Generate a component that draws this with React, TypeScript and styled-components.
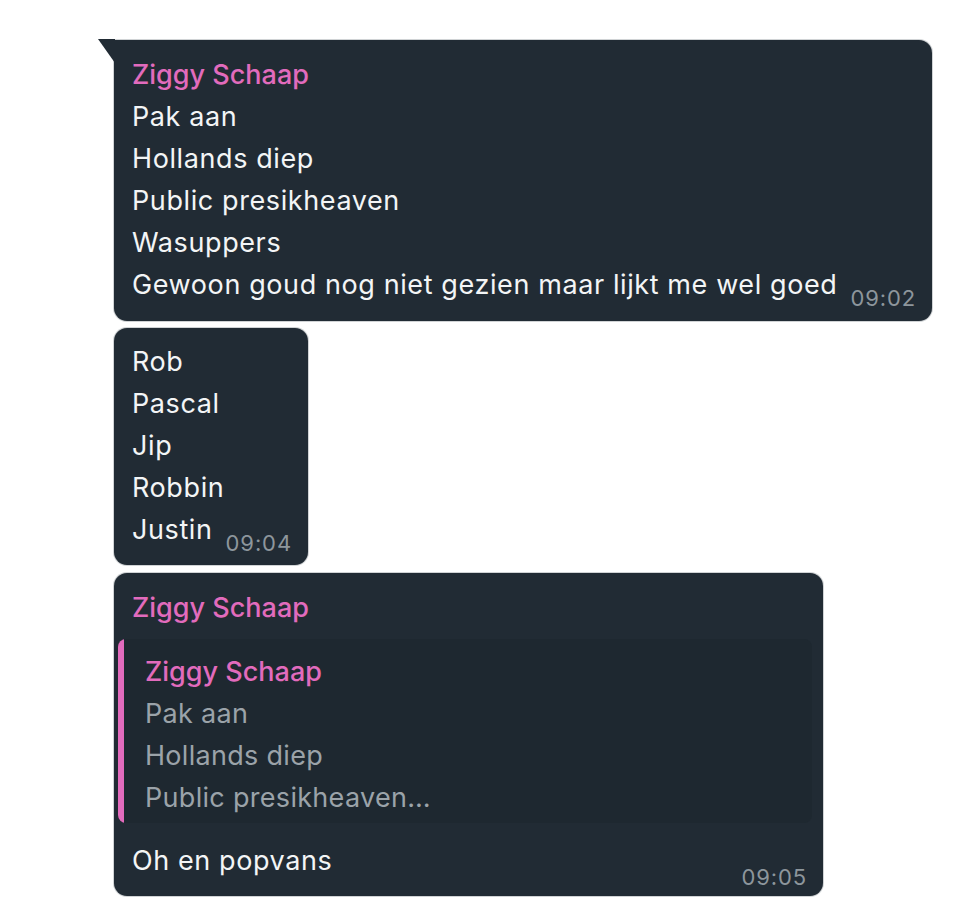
import React from "react";
import styled, { createGlobalStyle } from "styled-components";

const Global = createGlobalStyle`
  html, body { margin: 0; padding: 0; background: #ffffff; }
  body { font-family: Inter, "Noto Sans", sans-serif; }
`;

const Page = styled.div`
  width: 954px;
  height: 910px;
  box-sizing: border-box;
  padding: 40px 0 0 114px;
  display: flex;
  flex-direction: column;
  align-items: flex-start;
  gap: 7px;
  background: #fff;
`;

const Bubble = styled.div<{ $tail?: boolean; $width?: number; $pad?: string }>`
  position: relative;
  box-sizing: border-box;
  width: ${(p) => (p.$width ? `${p.$width}px` : "fit-content")};
  background: #212b34;
  border-radius: ${(p) => (p.$tail ? "0 13px 13px 13px" : "13px")};
  padding: ${(p) => p.$pad ?? "14px 16px 14px 18px"};
  color: #f3f5f6;
  font-size: 27px;
  letter-spacing: 0.6px;
  line-height: 42px;
  box-shadow: 0 0 0 1px rgba(120, 128, 134, 0.35);
  ${(p) =>
    p.$tail &&
    `
    &::before {
      content: "";
      position: absolute;
      left: -16px;
      top: -1px;
      width: 17px;
      height: 24px;
      background: #212b34;
      clip-path: polygon(0 0, 100% 0, 100% 100%);
    }
  `}
`;

const Name = styled.div`
  color: #e26bbd;
  font-weight: 500;
  letter-spacing: 0;
`;

const Line = styled.div`
  white-space: nowrap;
`;

const Time = styled.span`
  position: relative;
  top: 12px;
  display: inline-block;
  margin-left: 13px;
  font-size: 22px;
  letter-spacing: 0.9px;
  color: #8d969c;
  line-height: 20px;
`;

const LastRow = styled.div`
  display: flex;
  justify-content: space-between;
  align-items: flex-end;
`;

const EndTime = styled.span`
  font-size: 22px;
  letter-spacing: 0.9px;
  color: #8d969c;
  line-height: 22px;
  margin-bottom: -6px;
`;

const Quote = styled.div`
  position: relative;
  box-sizing: border-box;
  margin: 10px 0 17px -14px;
  width: 694px;
  background: #1e2830;
  border-radius: 8px;
  padding: 12px 10px 4px 27px;
  overflow: hidden;
  &::before {
    content: "";
    position: absolute;
    left: 0;
    top: 0;
    bottom: 0;
    width: 6px;
    background: #e26bbd;
  }
`;

const QuoteLine = styled.div`
  color: #9ba3a9;
  letter-spacing: 0.3px;
`;

const Spacer = styled.div`
  height: 1px;
  margin-top: -7px;
`;

export default function App() {
  return (
    <>
      <Global />
      <Page>
        <Bubble $tail $pad="14px 16px 15px 18px">
          <Name>Ziggy Schaap</Name>
          <Line>Pak aan</Line>
          <Line>Hollands diep</Line>
          <Line>Public presikheaven</Line>
          <Line>Wasuppers</Line>
          <Line>
            Gewoon goud nog niet gezien maar lijkt me wel goed
            <Time>09:02</Time>
          </Line>
        </Bubble>
        <Bubble $pad="13px 16px 14px 18px">
          <Line>Rob</Line>
          <Line>Pascal</Line>
          <Line>Jip</Line>
          <Line>Robbin</Line>
          <Line>
            Justin
            <Time>09:04</Time>
          </Line>
        </Bubble>
        <Spacer />
        <Bubble $width={709}>
          <Name>Ziggy Schaap</Name>
          <Quote>
            <Name>Ziggy Schaap</Name>
            <QuoteLine>Pak aan</QuoteLine>
            <QuoteLine>Hollands diep</QuoteLine>
            <QuoteLine>Public presikheaven…</QuoteLine>
          </Quote>
          <LastRow>
            <Line>Oh en popvans</Line>
            <EndTime>09:05</EndTime>
          </LastRow>
        </Bubble>
      </Page>
    </>
  );
}
